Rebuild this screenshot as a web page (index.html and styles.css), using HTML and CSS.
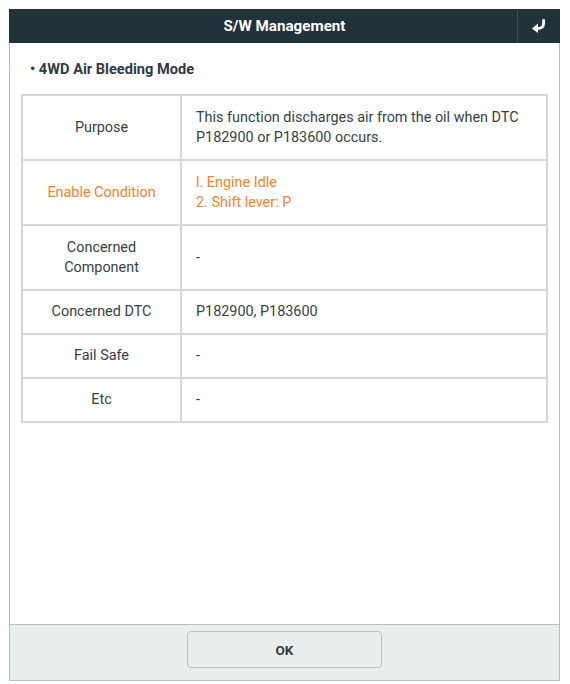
FILE: index.html
```html
<!DOCTYPE html>
<html lang="en">
<head>
    <meta charset="UTF-8">
    <meta name="viewport" content="width=device-width, initial-scale=1.0">
    <title>S/W Management</title>
    <link rel="stylesheet" href="styles.css">
</head>
<body>
    <div class="panel">
        <div class="header">
            <h1>S/W Management</h1>
            <button class="back" type="button" aria-label="Back">
                <svg width="16" height="14" viewBox="0 0 16 14">
                    <path d="M12.6 1.4 V4 Q12.6 9.4 7.5 9.4 H6" fill="none" stroke="#fff" stroke-width="2.8" stroke-linecap="round"/>
                    <polygon points="1,9.4 7,4.4 7,14" fill="#fff"/>
                </svg>
            </button>
        </div>

        <div class="content">
            <p class="mode">• 4WD Air Bleeding Mode</p>

            <table class="info">
                <tr class="tall">
                    <th>Purpose</th>
                    <td>This function discharges air from the oil when DTC<br>P182900 or P183600 occurs.</td>
                </tr>
                <tr class="tall warn">
                    <th>Enable Condition</th>
                    <td>l. Engine Idle<br>2. Shift lever: P</td>
                </tr>
                <tr class="tall">
                    <th>Concerned<br>Component</th>
                    <td>-</td>
                </tr>
                <tr>
                    <th>Concerned DTC</th>
                    <td>P182900, P183600</td>
                </tr>
                <tr>
                    <th>Fail Safe</th>
                    <td>-</td>
                </tr>
                <tr>
                    <th>Etc</th>
                    <td>-</td>
                </tr>
            </table>
        </div>

        <div class="footer">
            <button class="ok" type="button">OK</button>
        </div>
    </div>
</body>
</html>
```

FILE: styles.css
```css
body {
    margin: 0;
    padding: 9px 0 0 9px;
    background: #fff;
    font-family: Roboto, "Liberation Sans", sans-serif;
    color: #363f45;
}

.panel {
    width: 549px;
    height: 671px;
    border: 1px solid #b9bdbd;
    border-top: none;
    display: flex;
    flex-direction: column;
}

.header {
    height: 34px;
    margin: 0 -1px;
    background: #22323b;
    display: flex;
    align-items: center;
}

.header h1 {
    flex: 1;
    margin: 0;
    padding-left: 43px;
    text-align: center;
    color: #fff;
    font-size: 15.2px;
    font-weight: bold;
}

.back {
    width: 43px;
    height: 34px;
    padding: 0;
    border: none;
    border-left: 1px solid #3a4a52;
    background: transparent;
    display: flex;
    align-items: center;
    justify-content: center;
}

.content {
    flex: 1;
    padding: 17px 11px 0 11px;
}

.mode {
    margin: 0 0 16px 9px;
    font-size: 14.6px;
    font-weight: bold;
    line-height: 18px;
    color: #2f3a40;
}

.info {
    width: 527px;
    border-collapse: collapse;
    border: 2px solid #c4c6c6;
    font-size: 14.4px;
    line-height: 20px;
}

.info th,
.info td {
    border: 2px solid #d6d8d8;
    height: 42px;
    padding: 0;
}

.info th {
    width: 157px;
    font-weight: normal;
    text-align: center;
}

.info td {
    padding-left: 14px;
    text-align: left;
}

.info tr.tall th,
.info tr.tall td {
    height: 63px;
}

.info tr.warn {
    color: #f5832a;
}

.footer {
    height: 56px;
    border-top: 1px solid #b9bdbd;
    background: #e9efed;
    display: flex;
    justify-content: center;
    padding-top: 6px;
    box-sizing: border-box;
}

.ok {
    width: 195px;
    height: 37px;
    border: 1px solid #bcc0c0;
    border-radius: 4px;
    background: #e9efed;
    font-family: Roboto, "Liberation Sans", sans-serif;
    font-size: 13.5px;
    font-weight: bold;
    color: #333c42;
}
```
